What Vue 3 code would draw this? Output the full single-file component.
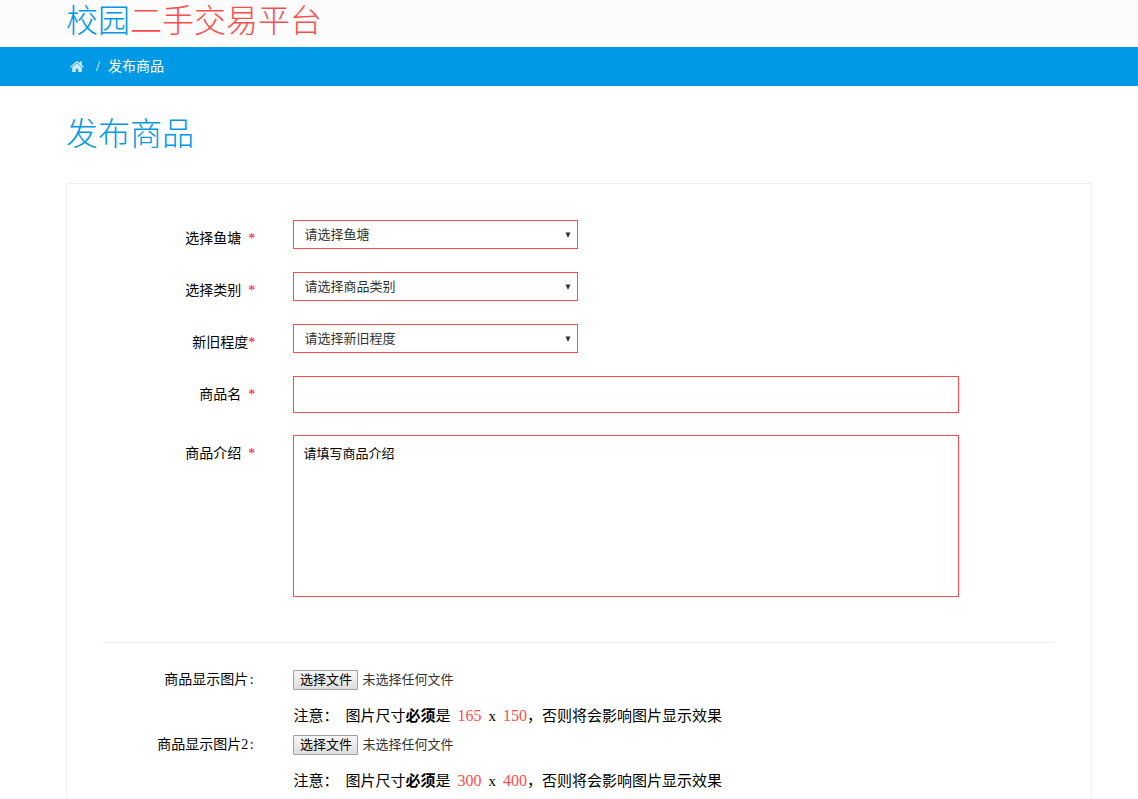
<script setup>
import { ref } from 'vue'

const selects = [
  { id: 'pond', label: '选择鱼塘', gap: true, placeholder: '请选择鱼塘' },
  { id: 'category', label: '选择类别', gap: true, placeholder: '请选择商品类别' },
  { id: 'condition', label: '新旧程度', gap: false, placeholder: '请选择新旧程度' },
]

const uploads = [
  { id: 'image1', label: '商品显示图片', width: 165, height: 150 },
  { id: 'image2', label: '商品显示图片2', width: 300, height: 400 },
]

const name = ref('')
const intro = ref('请填写商品介绍')
const fileNames = ref({})

function openPicker(id) {
  document.getElementById(id).click()
}

function onPick(id, event) {
  fileNames.value[id] = event.target.files[0]?.name
}
</script>

<template>
  <div class="page">
    <header class="brand">
      <span class="brand-blue">校园</span><span class="brand-red">二手交易平台</span>
    </header>

    <nav class="crumbs" aria-label="breadcrumb">
      <a href="#" class="home" aria-label="首页">
        <svg viewBox="0 0 14 14" width="14" height="14" aria-hidden="true">
          <path d="M7 1 0.2 6.7 1.1 7.7 7 2.8 12.9 7.7 13.8 6.7 11.8 5V1.4H9.7v1.9z" />
          <path d="M7 3.6 2.2 7.6V12H5.8V8.8H8.2V12h3.6V7.6z" />
        </svg>
      </a>
      <span class="slash">/</span>
      <span>发布商品</span>
    </nav>

    <main class="content">
      <h1>发布商品</h1>
      <form class="panel" @submit.prevent>
        <div v-for="s in selects" :key="s.id" class="row">
          <label :for="s.id">{{ s.label }}<b class="star" :class="{ spaced: s.gap }">*</b></label>
          <div class="field">
            <div class="select">
              <select :id="s.id">
                <option>{{ s.placeholder }}</option>
              </select>
              <svg viewBox="0 0 6 6" width="6" height="6" aria-hidden="true"><path d="M0.5 0.5h5L3.4 5.2h-.8z" /></svg>
            </div>
          </div>
        </div>

        <div class="row name-row">
          <label for="name">商品名<b class="star spaced">*</b></label>
          <div class="field"><input id="name" v-model="name" class="box" type="text"></div>
        </div>

        <div class="row">
          <label for="intro">商品介绍<b class="star spaced">*</b></label>
          <div class="field"><textarea id="intro" v-model="intro" class="box"></textarea></div>
        </div>

        <hr>

        <div v-for="u in uploads" :key="u.id" class="row upload">
          <label :for="u.id">{{ u.label }}<span class="colon">:</span></label>
          <div class="field">
            <div class="picker">
              <input :id="u.id" type="file" hidden @change="onPick(u.id, $event)">
              <button type="button" @click="openPicker(u.id)">选择文件</button>
              <span>{{ fileNames[u.id] || '未选择任何文件' }}</span>
            </div>
            <p class="note">
              <span>注意：</span>
              <span>图片尺寸<strong>必须</strong>是</span>
              <span class="num">{{ u.width }}</span>
              <span>x</span>
              <span><span class="num">{{ u.height }}</span>，否则将会影响图片显示效果</span>
            </p>
          </div>
        </div>
      </form>
    </main>
  </div>
</template>

<style>
body {
  margin: 0;
  background: #fff;
}
</style>

<style scoped>
.page {
  color: #000;
  font-family: "Liberation Serif", "Noto Sans CJK SC", sans-serif;
  font-size: 14px;
  line-height: 20px;
}

.brand,
.crumbs,
.content {
  padding: 0 46px 0 66px;
}

.brand {
  height: 47px;
  box-sizing: border-box;
  background: #fcfcfc;
  font-size: 32px;
  font-weight: 300;
  line-height: 42px;
}

.brand-blue,
h1 {
  color: #0099e5;
}

.brand-red {
  color: #ff4c4c;
}

.crumbs {
  display: flex;
  align-items: center;
  height: 39px;
  background: #0099e5;
  color: #fff;
}

.home {
  display: flex;
  margin: 0 12px 0 4px;
}

.home svg {
  fill: #d0ecfb;
}

.slash {
  width: 12px;
}

h1 {
  margin: 0;
  padding: 28px 0 29px;
  font-size: 32px;
  font-weight: 300;
  line-height: 40px;
}

.panel {
  padding: 36px;
  border: 1px solid #eee;
}

.row {
  display: grid;
  grid-template-columns: 16% 80%;
  justify-content: space-between;
  margin-bottom: 23px;
}

.name-row {
  margin-bottom: 22px;
}

.row > label {
  padding-top: 9px;
  text-align: right;
}

.star,
.colon {
  display: inline-block;
  width: 7px;
  text-align: center;
}

.star {
  color: #f00;
  font-weight: 400;
}

.spaced {
  margin-left: 7px;
}

.select {
  display: grid;
  grid-template-columns: 1fr 13px;
  align-items: center;
  width: 37.4%;
}

.select select {
  grid-area: 1 / 1 / 2 / 3;
  width: 100%;
  height: 29px;
  padding: 0 10px;
  border: 1px solid #ff4c4c;
  border-radius: 0;
  background: #fff;
  color: #333;
  font: inherit;
  font-size: 13px;
  appearance: none;
}

.select svg {
  grid-area: 1 / 2;
  fill: #333;
  pointer-events: none;
}

.box {
  display: block;
  width: 87.4%;
  box-sizing: border-box;
  padding: 8px 9px;
  border: 1px solid #ff4c4c;
  border-radius: 0;
  outline: none;
  background: #fff;
  color: #000;
  font: inherit;
  font-size: 13px;
}

input.box {
  height: 37px;
}

textarea.box {
  height: 162px;
  resize: none;
}

hr {
  height: 1px;
  margin: 45px 0 27px;
  border: 0;
  background: #eee;
}

.upload {
  margin-bottom: 8px;
}

.upload > label {
  padding: 0;
}

.picker {
  display: flex;
  align-items: center;
  gap: 4px;
  height: 20px;
  color: #333;
  font-size: 13px;
}

.picker button {
  width: 65px;
  height: 20px;
  padding: 0;
  border: 1px solid #a0a0a0;
  border-radius: 1px;
  background: linear-gradient(#f6f6f6, #dedede);
  color: #000;
  font: inherit;
  line-height: 18px;
}

.note {
  display: flex;
  flex-wrap: wrap;
  align-items: baseline;
  gap: 7px;
  margin: 16px 0 0;
  font-size: 15px;
  line-height: 21px;
}

.note strong {
  font-weight: 700;
}

.num {
  color: #ff4c4c;
  font-size: 16px;
  line-height: 16px;
}
</style>
